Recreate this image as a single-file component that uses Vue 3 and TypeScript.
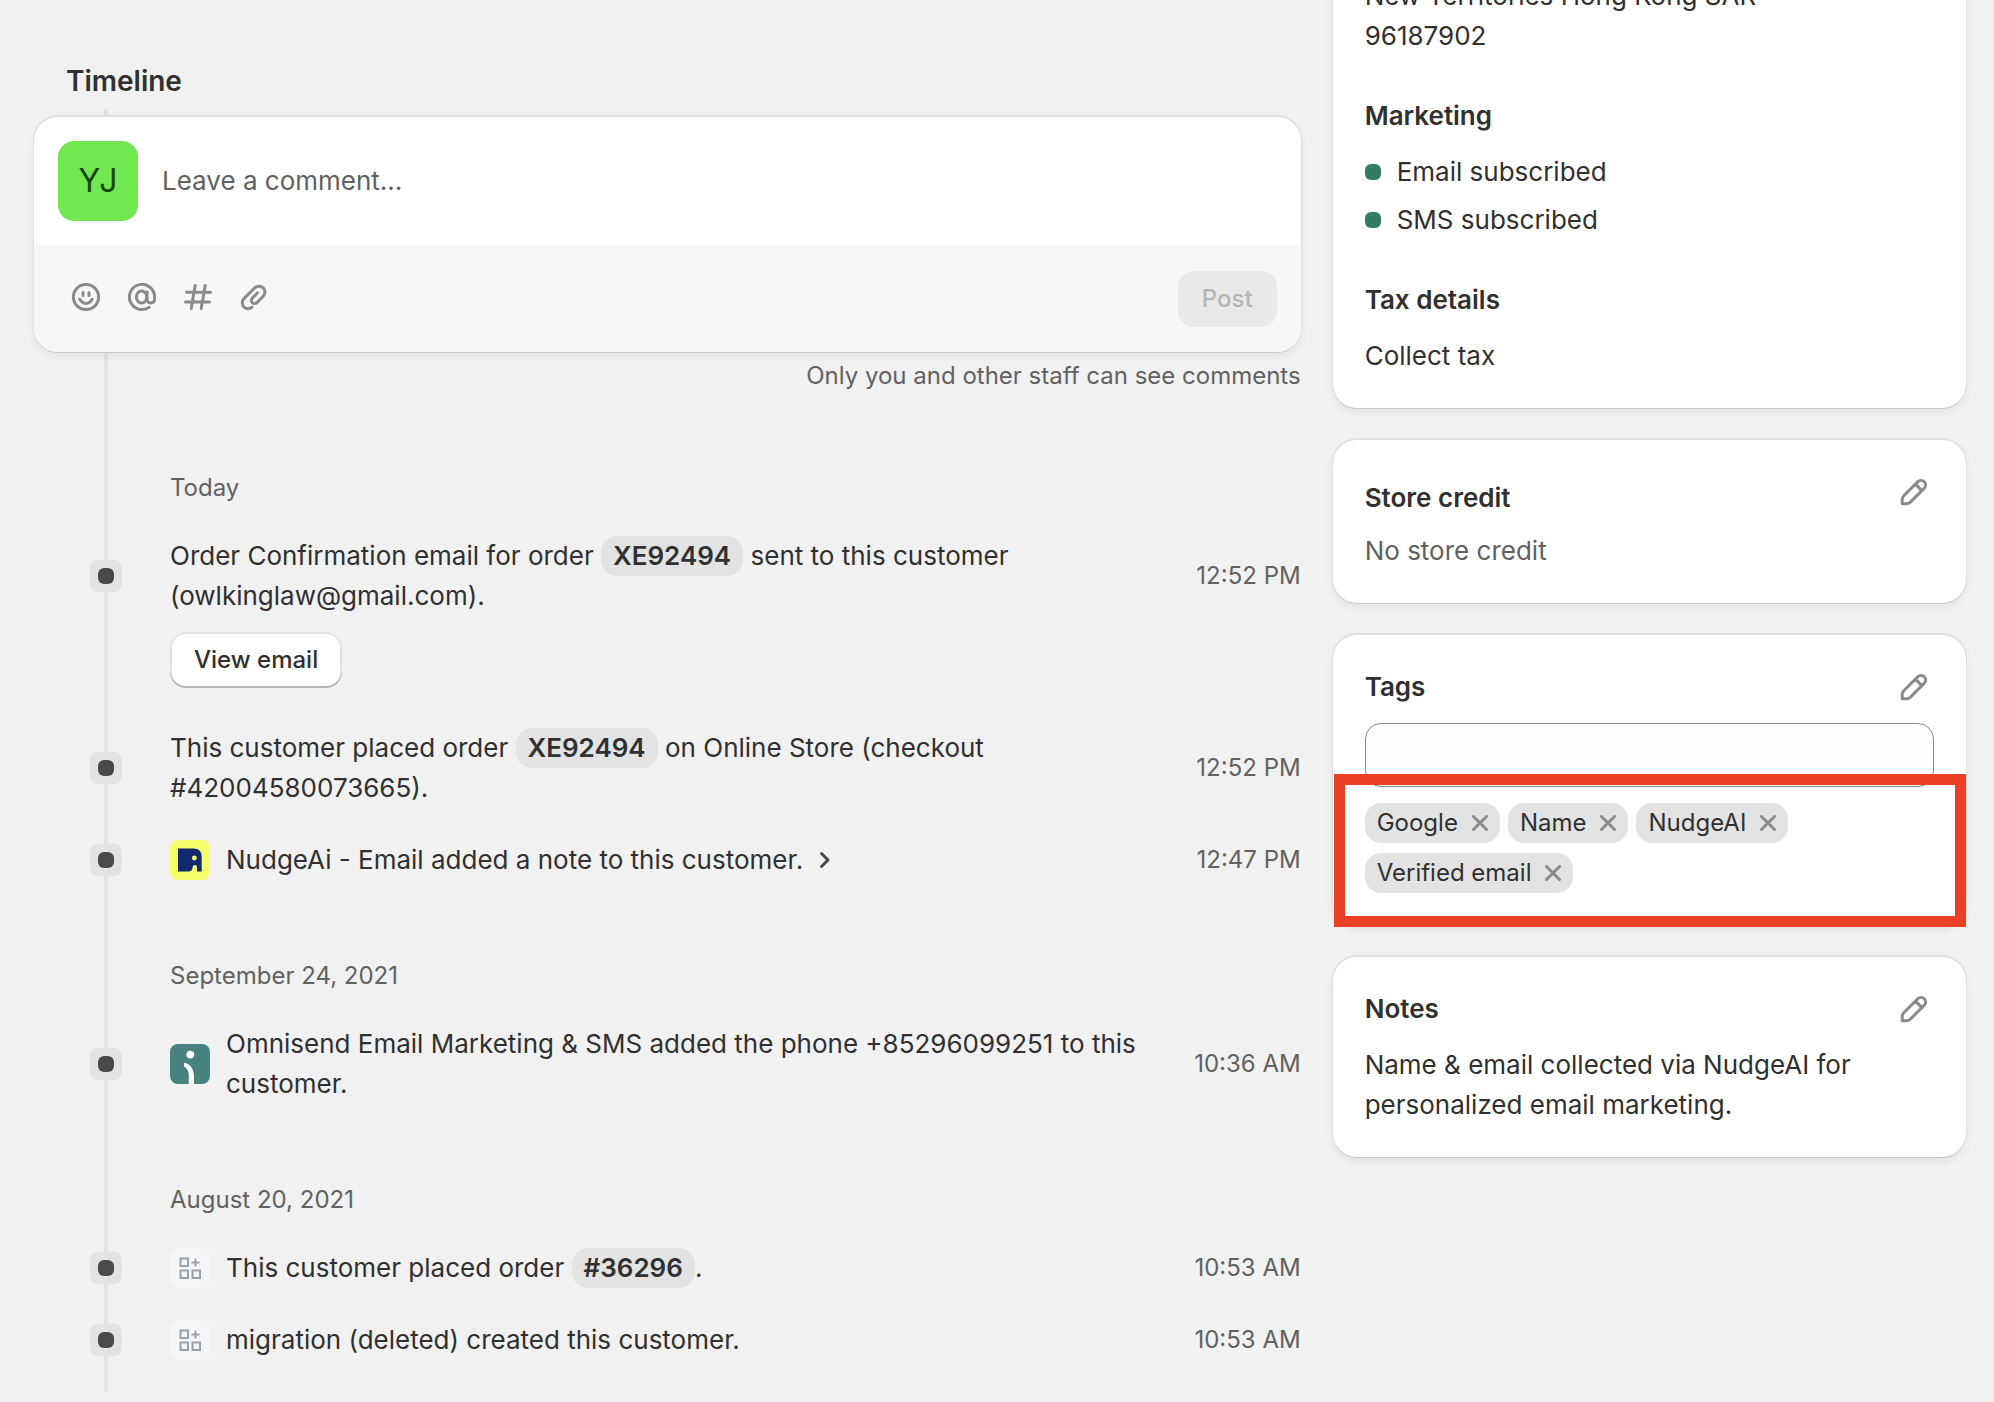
<script setup lang="ts">
import { ref } from 'vue'

type AppIcon = 'nudge' | 'omnisend' | 'placeholder'

interface TimelineEvent {
  id: number
  before: string
  order?: string
  after?: string
  time: string
  app?: AppIcon
  action?: string
  expandable?: boolean
}

interface TimelineDay {
  label: string
  events: TimelineEvent[]
}

const days: TimelineDay[] = [
  {
    label: 'Today',
    events: [
      {
        id: 1,
        before: 'Order Confirmation email for order ',
        order: 'XE92494',
        after: ' sent to this customer (owlkinglaw@gmail.com).',
        time: '12:52 PM',
        action: 'View email',
      },
      {
        id: 2,
        before: 'This customer placed order ',
        order: 'XE92494',
        after: ' on Online Store (checkout #42004580073665).',
        time: '12:52 PM',
      },
      {
        id: 3,
        before: 'NudgeAi - Email added a note to this customer.',
        time: '12:47 PM',
        app: 'nudge',
        expandable: true,
      },
    ],
  },
  {
    label: 'September 24, 2021',
    events: [
      {
        id: 4,
        before: 'Omnisend Email Marketing & SMS added the phone +85296099251 to this customer.',
        time: '10:36 AM',
        app: 'omnisend',
      },
    ],
  },
  {
    label: 'August 20, 2021',
    events: [
      {
        id: 5,
        before: 'This customer placed order ',
        order: '#36296',
        after: '.',
        time: '10:53 AM',
        app: 'placeholder',
      },
      {
        id: 6,
        before: 'migration (deleted) created this customer.',
        time: '10:53 AM',
        app: 'placeholder',
      },
    ],
  },
]

const comment = ref('')
const newTag = ref('')
const tags = ref<string[]>(['Google', 'Name', 'NudgeAI', 'Verified email'])

function removeTag(tag: string): void {
  tags.value = tags.value.filter((t) => t !== tag)
}

function addTag(): void {
  const tag = newTag.value.trim()
  if (tag && !tags.value.includes(tag)) tags.value.push(tag)
  newTag.value = ''
}
</script>

<template>
  <div class="page">
    <main class="main">
      <h2 class="timeline-title">Timeline</h2>
      <div class="timeline">
        <form class="composer" @submit.prevent>
          <div class="composer-top">
            <span class="avatar">YJ</span>
            <input v-model="comment" class="comment" type="text" placeholder="Leave a comment..." aria-label="Leave a comment" />
          </div>
          <div class="composer-bar">
            <div class="tools">
              <button type="button" class="tool" aria-label="Emoji">
                <svg viewBox="0 0 40 40" class="glyph">
                  <circle cx="20" cy="20" r="12.6" />
                  <path d="M17 15.6v3M23 15.6v3" />
                  <path d="M13.8 22.2c1.4 2.8 3.5 4.2 6.2 4.2s4.8-1.4 6.2-4.2" />
                </svg>
              </button>
              <button type="button" class="tool" aria-label="Mention">
                <svg viewBox="0 0 40 40" class="glyph">
                  <path d="M27.2 30.3A12.6 12.6 0 1 1 32.6 20v1.8c0 2.6-1.4 4.2-3.7 4.2s-3.9-1.6-3.9-4.2V14.8" />
                  <ellipse cx="19.6" cy="20" rx="5.2" ry="6" />
                </svg>
              </button>
              <button type="button" class="tool" aria-label="Reference">
                <svg viewBox="0 0 40 40" class="glyph">
                  <path d="M17.2 8.5l-4 23M27.2 8.5l-4 23M8.5 15.2h24M7.5 25h24" />
                </svg>
              </button>
              <button type="button" class="tool" aria-label="Attach file">
                <svg viewBox="0 0 40 40" class="glyph">
                  <path d="M18 30.200c-2.600 2.200-6 1.800-8-.2-2.300-2.300-2.200-6.200.2-8.600l10.100-10.100c2.600-2.600 6.500-2.800 8.900-.4s2.200 6.300-.4 8.900l-5.600 5.600c-1.500 1.500-3.600 1.600-4.900.3s-1.200-3.400.3-4.900l5-5" />
                </svg>
              </button>
            </div>
            <button type="submit" class="post" disabled>Post</button>
          </div>
        </form>
        <p class="hint">Only you and other staff can see comments</p>

        <section v-for="day in days" :key="day.label" class="day">
          <h3 class="day-label">{{ day.label }}</h3>
          <ul class="events">
            <li v-for="event in day.events" :key="event.id" class="event">
              <div class="event-row">
                <span class="marker"><span class="marker-dot"></span></span>
                <svg v-if="event.app === 'nudge'" class="app-icon" viewBox="0 0 40 40" aria-hidden="true">
                  <rect width="40" height="40" rx="8" fill="#f5ff6b" />
                  <path d="M8 8.5h15.500q8.200 0 8.200 8.200V31.500H27V27q0-2-2.200-2T22.500 27.500q0 4-4.500 4H8z" fill="#10296f" />
                  <circle cx="24.4" cy="18" r="2.4" fill="#f5ff6b" />
                </svg>
                <svg v-else-if="event.app === 'omnisend'" class="app-icon" viewBox="0 0 40 40" aria-hidden="true">
                  <rect width="40" height="40" rx="8" fill="#48827e" />
                  <circle cx="20.3" cy="10.6" r="3.9" fill="#fff" />
                  <path d="M14 18.800c5.500.5 10 5.700 10 14.200v7h-5.200v-8c0-5-1.600-7.600-4.800-9.400z" fill="#fff" />
                </svg>
                <svg v-else-if="event.app === 'placeholder'" class="app-icon" viewBox="0 0 40 40" aria-hidden="true">
                  <rect width="40" height="40" rx="8" fill="#f4f6f8" />
                  <g fill="none" stroke="#98a2ae" stroke-width="2">
                    <path d="M10.500 10.500h7.500v7.500h-7.500zM10.500 22.500h7.500v7.500h-7.500zM22.500 22.500h7.500v7.500h-7.500z" />
                    <path d="M25.500 10.500v8M21.500 14.500h8" />
                  </g>
                </svg>
                <p class="event-text">{{ event.before }}<a v-if="event.order" href="#" class="order">{{ event.order }}</a>{{ event.after }}<button v-if="event.expandable" type="button" class="expand" aria-label="Show note"><svg viewBox="0 0 32 32" class="chevron"><path d="M12.500 9.500l6.500 6.500-6.500 6.500" /></svg></button></p>
                <time class="event-time">{{ event.time }}</time>
              </div>
              <button v-if="event.action" type="button" class="action">{{ event.action }}</button>
            </li>
          </ul>
        </section>
      </div>
    </main>

    <aside class="side">
      <section class="card customer">
        <p>New Territories Hong Kong SAR<br />96187902</p>
        <div class="block">
          <h3 class="card-title">Marketing</h3>
          <ul class="statuses">
            <li class="status"><span class="status-dot"></span>Email subscribed</li>
            <li class="status"><span class="status-dot"></span>SMS subscribed</li>
          </ul>
        </div>
        <div class="block">
          <h3 class="card-title">Tax details</h3>
          <p>Collect tax</p>
        </div>
      </section>

      <section class="card">
        <div class="card-head card-head-tall">
          <h3 class="card-title">Store credit</h3>
          <button type="button" class="edit" aria-label="Edit store credit">
            <svg viewBox="0 0 40 40" class="pencil"><path d="M8.200 31.800v-4.300q0-2.200 1.600-3.800L23.900 9.600a4.600 4.600 0 0 1 6.500 6.500L16.300 30.200q-1.600 1.600-3.800 1.600zM21.400 12.100l6.500 6.500" /></svg>
          </button>
        </div>
        <p class="subdued">No store credit</p>
      </section>

      <section class="card tags-card">
        <div class="card-head">
          <h3 class="card-title"><label for="tag-input">Tags</label></h3>
          <button type="button" class="edit" aria-label="Edit tags">
            <svg viewBox="0 0 40 40" class="pencil"><path d="M8.200 31.800v-4.300q0-2.200 1.600-3.800L23.900 9.600a4.600 4.600 0 0 1 6.500 6.500L16.300 30.200q-1.600 1.600-3.800 1.600zM21.400 12.100l6.500 6.500" /></svg>
          </button>
        </div>
        <input id="tag-input" v-model="newTag" class="tag-input" type="text" @keydown.enter="addTag" />
        <ul class="tags">
          <li v-for="tag in tags" :key="tag" class="tag">
            <span>{{ tag }}</span>
            <button type="button" class="remove" :aria-label="`Remove ${tag}`" @click="removeTag(tag)">
              <svg viewBox="0 0 16 16"><path d="M1.500 1.500l13 13M14.500 1.500l-13 13" /></svg>
            </button>
          </li>
        </ul>
        <div class="highlight"></div>
      </section>

      <section class="card">
        <div class="card-head">
          <h3 class="card-title">Notes</h3>
          <button type="button" class="edit" aria-label="Edit notes">
            <svg viewBox="0 0 40 40" class="pencil"><path d="M8.200 31.800v-4.300q0-2.200 1.600-3.800L23.900 9.600a4.600 4.600 0 0 1 6.500 6.500L16.300 30.200q-1.600 1.600-3.800 1.600zM21.400 12.100l6.500 6.500" /></svg>
          </button>
        </div>
        <p>Name &amp; email collected via NudgeAI for personalized email marketing.</p>
      </section>
    </aside>
  </div>
</template>

<style>
body {
  background: #f1f1f1;
}
</style>

<style scoped>
.page {
  display: grid;
  grid-template-columns: 2fr 1fr;
  gap: 32px;
  align-items: start;
  min-height: 100vh;
  padding: 0 28px 0 34px;
  box-sizing: border-box;
  overflow: hidden;
  background: #f1f1f1;
  color: #303030;
  font: 425 26px/40px Inter, "Liberation Sans", sans-serif;
}

h2,
h3,
p,
ul {
  margin: 0;
  padding: 0;
  list-style: none;
}

button,
input {
  font: inherit;
  color: inherit;
  border: 0;
  margin: 0;
  padding: 0;
  background: none;
}

svg {
  display: block;
}

/* Timeline column */
.timeline-title {
  padding: 61px 0 8px 32px;
  font-size: 28px;
  font-weight: 600;
}

.timeline {
  padding: 8px 0 32px;
  background: linear-gradient(#e3e3e3, #e3e3e3) 70px 0 / 4px 100% no-repeat;
}

.composer,
.card {
  border-radius: 24px;
  background: #fff;
  box-shadow: 0 1px 0 0 #c8c8c8, 0 -1px 0 1px #e0e0e0, 0 4px 8px rgba(26, 26, 26, 0.07);
}

.composer {
  overflow: hidden;
}

.composer-top {
  display: flex;
  align-items: center;
  gap: 24px;
  padding: 24px;
}

.avatar {
  flex: none;
  width: 80px;
  border-radius: 16px;
  background: #71e850;
  color: #174312;
  font-size: 32px;
  font-weight: 400;
  line-height: 80px;
  text-align: center;
}

.comment {
  flex: 1;
  min-width: 0;
  height: 40px;
  outline: none;
}

.comment::placeholder {
  color: #616161;
  opacity: 1;
}

.composer-bar {
  display: flex;
  align-items: flex-start;
  justify-content: space-between;
  padding: 26px 24px 25px 32px;
  background: #f7f7f7;
}

.tools {
  display: flex;
  gap: 16px;
  padding-top: 6px;
}

.tool,
.edit {
  width: 40px;
  height: 40px;
}

.glyph,
.pencil {
  fill: none;
  stroke: #8a8a8a;
  stroke-width: 3;
  stroke-linecap: round;
  stroke-linejoin: round;
}

.post {
  height: 56px;
  padding: 0 24px;
  border-radius: 16px;
  background: #e9e9e9;
  color: #b5b5b5;
  font-size: 24px;
  font-weight: 550;
}

.hint {
  padding-top: 8px;
  color: #616161;
  font-size: 24px;
  line-height: 32px;
  text-align: right;
}

.day {
  padding-top: 80px;
}

.day-label {
  margin: 0 0 32px 136px;
  color: #616161;
  font-size: 24px;
  font-weight: 425;
  line-height: 32px;
}

.events {
  display: flex;
  flex-direction: column;
  gap: 32px;
}

.event-row {
  display: flex;
  align-items: center;
}

.marker {
  display: flex;
  flex: none;
  width: 32px;
  height: 32px;
  margin: 0 48px 0 56px;
  border-radius: 8px;
  background: #e3e3e3;
}

.marker-dot {
  width: 16px;
  height: 16px;
  margin: auto;
  border-radius: 6px;
  background: #4a4a4a;
}

.app-icon {
  flex: none;
  width: 40px;
  height: 40px;
  margin-right: 16px;
}

.event-text {
  flex: 1;
  min-width: 0;
}

.order {
  display: inline-block;
  padding: 0 12px;
  border-radius: 16px;
  background: #e3e3e3;
  color: #303030;
  font-weight: 600;
  text-decoration: none;
}

.expand {
  width: 32px;
  height: 32px;
  margin: 4px 0 4px 6px;
  vertical-align: top;
}

.chevron {
  fill: none;
  stroke: #4a4a4a;
  stroke-width: 3;
  stroke-linecap: round;
  stroke-linejoin: round;
}

.event-time {
  flex: none;
  margin-left: 40px;
  color: #616161;
  font-size: 24px;
}

.action {
  height: 56px;
  margin: 16px 0 8px 136px;
  padding: 0 24px;
  border-radius: 16px;
  background: #fff;
  box-shadow: inset 0 -2px 0 #b5b5b5, inset 0 0 0 2px #e3e3e3;
  font-size: 24px;
  font-weight: 550;
}

/* Customer column */
.side {
  display: flex;
  flex-direction: column;
  gap: 32px;
  min-width: 0;
}

.card {
  padding: 32px;
}

/* The customer card is scrolled partly above the viewport. */
.customer {
  margin-top: -56px;
}

.block {
  padding-top: 40px;
}

.card-title {
  font-size: 26px;
  font-weight: 600;
}

.block .card-title {
  padding-bottom: 16px;
}

.statuses {
  display: flex;
  flex-direction: column;
  gap: 8px;
}

.status {
  display: flex;
  align-items: center;
  gap: 16px;
}

.status-dot {
  width: 16px;
  height: 16px;
  border-radius: 6px;
  background: #347c60;
}

.card-head {
  display: flex;
  align-items: center;
  justify-content: space-between;
  padding-bottom: 16px;
}

.card-head-tall {
  min-height: 51px;
  padding-bottom: 8px;
}

.card-head-tall .edit {
  align-self: flex-start;
}

.subdued {
  color: #616161;
}

.tags-card {
  position: relative;
}

.tag-input {
  display: block;
  width: 100%;
  height: 64px;
  padding: 0 24px;
  box-sizing: border-box;
  border: 1px solid #8a8a8a;
  border-radius: 16px;
  background: #fdfdfd;
}

.tags {
  display: flex;
  flex-wrap: wrap;
  gap: 10px 8px;
  padding-top: 16px;
}

.tag {
  display: flex;
  align-items: center;
  gap: 14px;
  padding: 0 12px;
  border-radius: 16px;
  background: #e3e3e3;
  font-size: 24px;
}

.remove {
  width: 16px;
  height: 16px;
}

.remove svg {
  fill: none;
  stroke: #8a8a8a;
  stroke-width: 3;
  stroke-linecap: round;
}

/* Callout frame drawn over the tag list */
.highlight {
  position: absolute;
  right: 0;
  bottom: -2px;
  left: 1px;
  height: 153px;
  box-sizing: border-box;
  border: 11px solid #ea4126;
  pointer-events: none;
}
</style>
